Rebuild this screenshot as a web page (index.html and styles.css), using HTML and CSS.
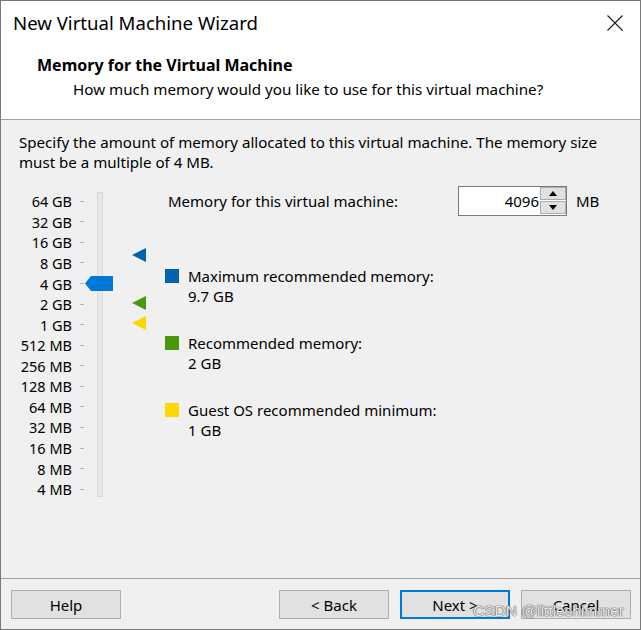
FILE: index.html
```html
<!DOCTYPE html>
<html>
<head>
<meta charset="utf-8">
<link rel="stylesheet" href="styles.css">
</head>
<body>
<div class="window">
  <div class="titlebar">
    <span class="title">New Virtual Machine Wizard</span>
    <svg class="close" width="16" height="16" viewBox="0 0 16 16"><path d="M0.5 0.5 L15.5 15.5 M15.5 0.5 L0.5 15.5" stroke="#1a1a1a" stroke-width="1.1" fill="none"/></svg>
  </div>
  <div class="header">
    <div class="h-title">Memory for the Virtual Machine</div>
    <div class="h-sub">How much memory would you like to use for this virtual machine?</div>
  </div>
  <div class="content">
    <p class="desc">Specify the amount of memory allocated to this virtual machine. The memory size must be a multiple of 4 MB.</p>
    <div class="main">
      <div class="scale">
        <div class="labels">
          <div class="row"><span class="lbl">64 GB</span><i class="tick"></i></div>
          <div class="row"><span class="lbl">32 GB</span><i class="tick"></i></div>
          <div class="row"><span class="lbl">16 GB</span><i class="tick"></i></div>
          <div class="row"><span class="lbl">8 GB</span><i class="tick"></i></div>
          <div class="row"><span class="lbl">4 GB</span><i class="tick"></i></div>
          <div class="row"><span class="lbl">2 GB</span><i class="tick"></i></div>
          <div class="row"><span class="lbl">1 GB</span><i class="tick"></i></div>
          <div class="row"><span class="lbl">512 MB</span><i class="tick"></i></div>
          <div class="row"><span class="lbl">256 MB</span><i class="tick"></i></div>
          <div class="row"><span class="lbl">128 MB</span><i class="tick"></i></div>
          <div class="row"><span class="lbl">64 MB</span><i class="tick"></i></div>
          <div class="row"><span class="lbl">32 MB</span><i class="tick"></i></div>
          <div class="row"><span class="lbl">16 MB</span><i class="tick"></i></div>
          <div class="row"><span class="lbl">8 MB</span><i class="tick"></i></div>
          <div class="row"><span class="lbl">4 MB</span><i class="tick"></i></div>
        </div>
        <div class="track"></div>
        <svg class="thumb" width="28" height="15" viewBox="0 0 28 15"><polygon points="0,7.5 6,0 28,0 28,15 6,15" fill="#0078d7"/></svg>
        <svg class="marker m-max" width="14" height="14" viewBox="0 0 14 14"><polygon points="0,7 14,0 14,14" fill="#0063b1"/></svg>
        <svg class="marker m-rec" width="14" height="14" viewBox="0 0 14 14"><polygon points="0,7 14,0 14,14" fill="#4a9710"/></svg>
        <svg class="marker m-min" width="14" height="14" viewBox="0 0 14 14"><polygon points="0,7 14,0 14,14" fill="#fcd800"/></svg>
      </div>
      <div class="panel">
        <div class="mem-row">
          <span class="mem-label">Memory for this virtual machine:</span>
          <div class="spin">
            <span class="spin-val">4096</span>
            <div class="spin-btns">
              <div class="sbtn"><svg width="8" height="5" viewBox="0 0 8 5"><polygon points="0,5 4,0 8,5" fill="#000"/></svg></div>
              <div class="sbtn"><svg width="8" height="5" viewBox="0 0 8 5"><polygon points="0,0 8,0 4,5" fill="#000"/></svg></div>
            </div>
          </div>
          <span class="unit">MB</span>
        </div>
        <div class="legend">
          <div class="item">
            <i class="sq sq-blue"></i>
            <div><div>Maximum recommended memory:</div><div>9.7 GB</div></div>
          </div>
          <div class="item">
            <i class="sq sq-green"></i>
            <div><div>Recommended memory:</div><div>2 GB</div></div>
          </div>
          <div class="item">
            <i class="sq sq-yellow"></i>
            <div><div>Guest OS recommended minimum:</div><div>1 GB</div></div>
          </div>
        </div>
      </div>
    </div>
  </div>
  <div class="footer">
    <button class="btn">Help</button>
    <div class="spacer"></div>
    <button class="btn">&lt; Back</button>
    <button class="btn btn-default">Next &gt;</button>
    <button class="btn">Cancel</button>
    <span class="watermark">CSDN @littleshimmer</span>
  </div>
</div>
</body>
</html>
```
FILE: styles.css
```css
* { box-sizing: border-box; }
html, body { margin: 0; padding: 0; background: #f0f0f0; }
body { font-family: "Noto Sans", "Open Sans", sans-serif; font-size: 15px; color: #000; }

.window {
  width: 641px;
  height: 630px;
  border: 1px solid #7a7a7a;
  border-top-color: #6f766f;
  display: flex;
  flex-direction: column;
  background: #f0f0f0;
  position: relative;
}

.titlebar {
  height: 43px;
  background: #fff;
  display: flex;
  align-items: center;
  padding: 0 17px 0 12px;
}
.title { font-size: 18.6px; flex: 1; line-height: 43px; }
.close { display: block; margin-top: 0; }

.header {
  background: #fff;
  height: 76px;
  border-bottom: 1px solid #a0a0a0;
  padding-top: 11px;
}
.h-title { font-weight: bold; font-size: 16px; line-height: 20px; padding-left: 36px; }
.h-sub { font-size: 15.2px; line-height: 20px; margin-top: 4px; padding-left: 72px; }

.content { flex: 1; display: flex; flex-direction: column; }
.desc { margin: 12px 0 0 0; padding: 0 18px; line-height: 20px; font-size: 15.1px; }

.main { display: flex; margin-top: 14px; }

.scale {
  position: relative;
  width: 164px;
  padding-top: 5px;
  display: flex;
  align-items: flex-start;
}
.labels { display: flex; flex-direction: column; width: 83px; }
.row { height: 20.57px; display: flex; align-items: center; }
.lbl { width: 71px; text-align: right; line-height: 20px; white-space: nowrap; font-size: 14.5px; }
.tick { display: block; width: 4px; height: 1px; background: #b4b4b4; margin-left: 8px; }
.track {
  width: 6px;
  height: 305px;
  margin: 1px 0 0 13px;
  background: #e7e7e7;
  border: 1px solid #d9d9d9;
}
.thumb { position: absolute; left: 84px; top: 90px; display: block; }
.marker { position: absolute; left: 131px; display: block; }
.m-max { top: 62px; }
.m-rec { top: 110px; }
.m-min { top: 130px; }

.panel { flex: 1; }
.mem-row { display: flex; align-items: center; height: 30px; }
.mem-label { width: 293px; padding-left: 3px; line-height: 20px; white-space: nowrap; }
.spin {
  width: 109px;
  height: 30px;
  background: #fff;
  border: 1px solid #7a7a7a;
  display: flex;
  align-items: stretch;
}
.spin-val { flex: 1; text-align: right; line-height: 28px; padding-right: 1px; }
.spin-btns { width: 26px; display: flex; flex-direction: column; gap: 1px; padding: 0 0 1px 0; }
.sbtn {
  flex: 1;
  background: #e1e1e1;
  border: 1px solid #adadad;
  display: flex;
  align-items: center;
  justify-content: center;
}
.sbtn svg { display: block; }
.unit { margin-left: 9px; line-height: 20px; }

.legend { margin-top: 50px; display: flex; flex-direction: column; gap: 26.5px; }
.item { display: flex; align-items: flex-start; line-height: 20.3px; }
.sq { display: block; width: 14px; height: 14px; margin: 3px 9px 0 0; }
.sq-blue { background: #0063b1; }
.sq-green { background: #4a9710; }
.sq-yellow { background: #fcd800; }

.footer {
  height: 51px;
  border-top: 1px solid #a0a0a0;
  display: flex;
  align-items: flex-start;
  padding: 11px 9px 0 10px;
  gap: 11px;
  position: relative;
}
.spacer { flex: 1; }
.btn {
  width: 110px;
  height: 29px;
  background: #e1e1e1;
  border: 1px solid #adadad;
  font-family: "Noto Sans", "Open Sans", sans-serif;
  font-size: 15px;
  color: #000;
  padding: 0;
  margin: 0;
}
.btn-default { border: 2px solid #0078d7; }
.watermark {
  position: absolute;
  left: 472px;
  top: 23px;
  font-family: "Liberation Sans", Arial, sans-serif;
  font-size: 15.5px;
  color: rgba(255, 255, 255, 0.9);
  text-shadow: 0 0 1px #5a5a5a, 0 0 1px #5a5a5a, 0 0 1px #5a5a5a;
  white-space: nowrap;
}
```
